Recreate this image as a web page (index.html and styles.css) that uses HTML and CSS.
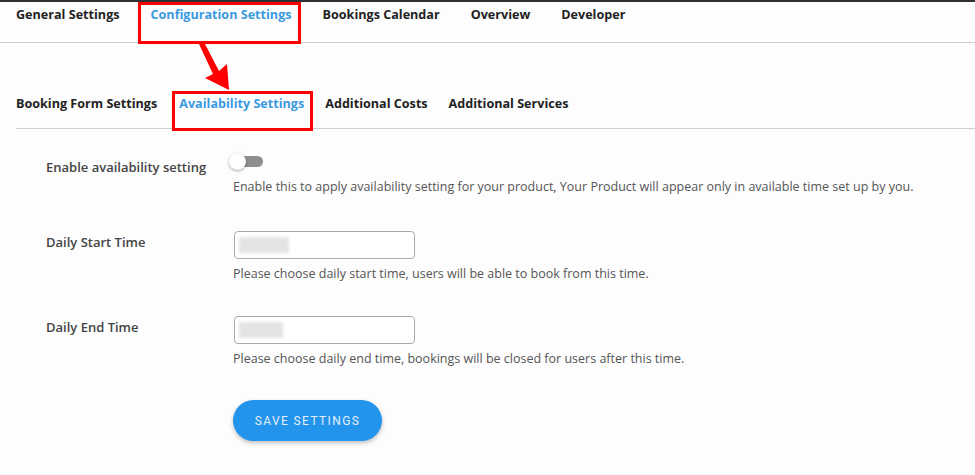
FILE: index.html
```html
<!DOCTYPE html>
<html>
<head>
<meta charset="utf-8">
<link rel="stylesheet" href="styles.css">
</head>
<body>
<div class="page">
  <nav class="tabs top">
    <a class="tab">General Settings</a>
    <a class="tab active">Configuration Settings</a>
    <a class="tab">Bookings Calendar</a>
    <a class="tab">Overview</a>
    <a class="tab">Developer</a>
  </nav>
  <nav class="tabs sub">
    <a class="tab">Booking Form Settings</a>
    <a class="tab active">Availability Settings</a>
    <a class="tab">Additional Costs</a>
    <a class="tab">Additional Services</a>
  </nav>
  <form class="form">
    <div class="row first">
      <label class="label">Enable availability setting</label>
      <div class="field">
        <span class="toggle"><span class="knob"></span></span>
        <p class="help">Enable this to apply availability setting for your product, Your Product will appear only in available time set up by you.</p>
      </div>
    </div>
    <div class="row">
      <label class="label">Daily Start Time</label>
      <div class="field">
        <div class="input"><span class="blur w1"></span></div>
        <p class="help">Please choose daily start time, users will be able to book from this time.</p>
      </div>
    </div>
    <div class="row last">
      <label class="label">Daily End Time</label>
      <div class="field">
        <div class="input"><span class="blur w2"></span></div>
        <p class="help">Please choose daily end time, bookings will be closed for users after this time.</p>
      </div>
    </div>
    <div class="row">
      <span class="label"></span>
      <div class="field"><button type="button" class="save">SAVE SETTINGS</button></div>
    </div>
  </form>

  <div class="annot box1"></div>
  <div class="annot box2"></div>
  <svg class="arrow" width="975" height="475" viewBox="0 0 975 475">
    <polygon points="199,44 205,44 219,71 227,64 229,90 205,78 213,74" fill="#ff0000"/>
  </svg>
</div>
</body>
</html>
```
FILE: styles.css
```css
* { box-sizing: border-box; }
html, body { margin: 0; padding: 0; }
body {
  background: #fdfdfe;
  font-family: "Open Sans", Lato, sans-serif;
  color: #333;
  width: 975px;
  height: 475px;
  overflow: hidden;
}
.page {
  position: relative;
  border-top: 2px solid #2d2f33;
  height: 475px;
}
.tabs {
  display: flex;
  align-items: center;
}
.tab {
  font-weight: 700;
  font-size: 12.6px;
  color: #222;
  white-space: nowrap;
}
.tab.active { color: #3a9ae0; }
.top {
  height: 41px;
  padding: 0 0 15px 16px;
  gap: 31px;
  border-bottom: 1px solid #cfcfcf;
}
.sub {
  margin: 46px 0 0 16px;
  height: 40px;
  padding-bottom: 10px;
  gap: 21px;
  border-bottom: 1px solid #cfcfcf;
}
.sub .tab.active { margin-left: 1px; }
.form {
  padding: 20px 0 0 46px;
  display: flex;
  flex-direction: column;
}
.row {
  display: grid;
  grid-template-columns: 187px 1fr;
  margin-bottom: 30px;
}
.row.first { margin-bottom: 32px; }
.row.last { margin-bottom: 29px; }
.label {
  font-size: 13px;
  font-weight: 600;
  color: #444;
  padding-top: 6px;
}
.row.first .label { padding-top: 9px; }
.field {
  display: flex;
  flex-direction: column;
  align-items: flex-start;
  padding-top: 4px;
}
.help {
  margin: 6px 0 0;
  font-size: 12.5px;
  color: #555;
}
.row.first .help { margin-top: 11px; }
.toggle {
  position: relative;
  display: block;
  width: 30px;
  height: 11px;
  margin: 3px 0 0 0;
  border-radius: 6px;
  background: #8e8e8e;
}
.knob {
  position: absolute;
  left: -4px;
  top: -3px;
  width: 17px;
  height: 17px;
  border-radius: 50%;
  background: #fff;
  box-shadow: 0 1px 3px rgba(0,0,0,0.35);
}
.input {
  width: 181px;
  height: 28px;
  border: 1px solid #aaa;
  border-radius: 4px;
  background: #fff;
  padding: 5px 4px;
  margin-left: 1px;
}
.blur {
  display: block;
  height: 16px;
  background: #e4e4e4;
  filter: blur(1.5px);
}
.w1 { width: 50px; }
.w2 { width: 44px; }
.save {
  width: 149px;
  height: 41px;
  border: none;
  border-radius: 21px;
  background: #2394ec;
  color: #e3eefa;
  font-family: Roboto, "Liberation Sans", sans-serif;
  font-size: 12px;
  font-weight: 400;
  letter-spacing: 1.4px;
  box-shadow: 0 2px 4px rgba(0,0,0,0.25);
}
.annot {
  position: absolute;
  border: 3px solid #ff0000;
}
.box1 { left: 138px; top: 0; width: 163px; height: 42px; }
.box2 { left: 172px; top: 89px; width: 141px; height: 40px; }
.arrow { position: absolute; left: 0; top: -2px; pointer-events: none; }
```
